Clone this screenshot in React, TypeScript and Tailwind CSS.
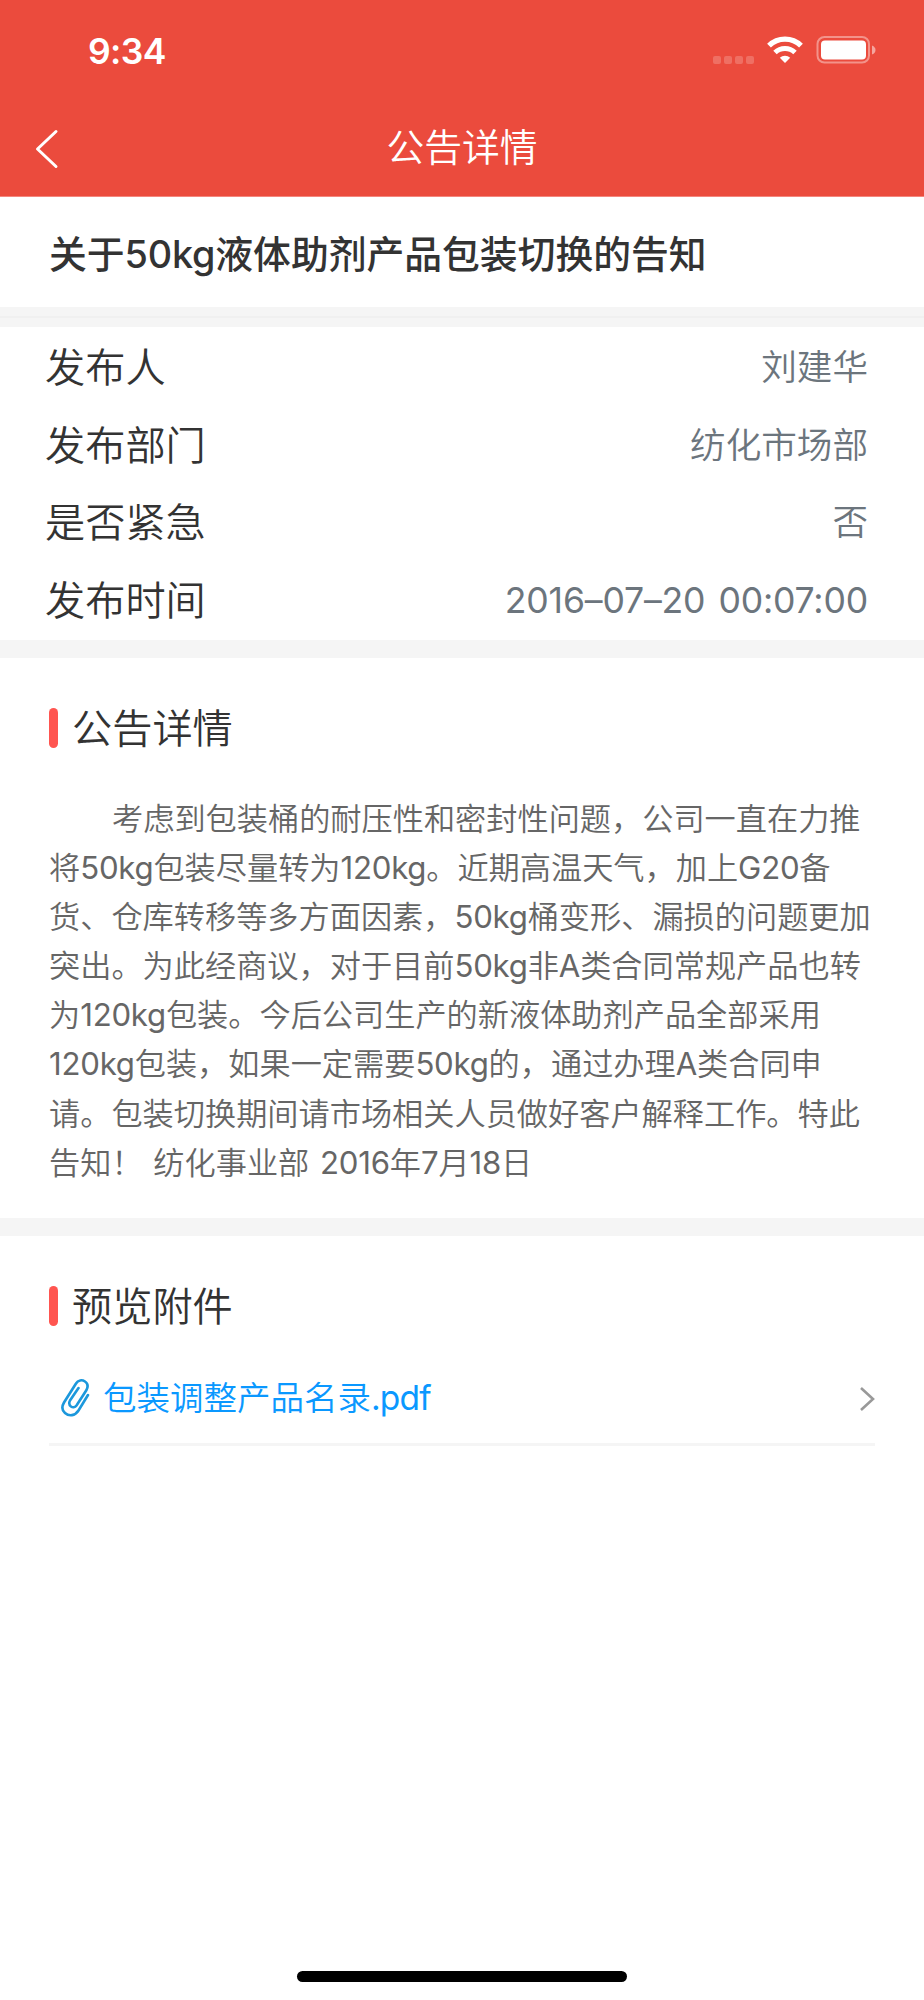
const info = [
  { label: "发布人", value: "刘建华" },
  { label: "发布部门", value: "纺化市场部" },
  { label: "是否紧急", value: "否" },
  { label: "发布时间", value: "2016–07–20 00:07:00" },
];

const lines = [
  "考虑到包装桶的耐压性和密封性问题，公司一直在力推",
  "将50kg包装尽量转为120kg。近期高温天气，加上G20备",
  "货、仓库转移等多方面因素，50kg桶变形、漏损的问题更加",
  "突出。为此经商议，对于目前50kg非A类合同常规产品也转",
  "为120kg包装。今后公司生产的新液体助剂产品全部采用",
  "120kg包装，如果一定需要50kg的，通过办理A类合同申",
  "请。包装切换期间请市场相关人员做好客户解释工作。特此",
  "告知！ 纺化事业部 2016年7月18日",
];

// style latin letters and digits on their own, leave the Chinese text alone
function Mixed({ text, latin }: { text: string; latin: string }) {
  return (
    <>
      {text.split(/([A-Za-z0-9.:–]+)/).map((part, i) =>
        i % 2 ? <span key={i} className={latin}>{part}</span> : part
      )}
    </>
  );
}

function StatusBar() {
  return (
    <div className="flex h-[100px] items-center pl-[88px] pr-[48px]">
      <span className="grow pt-[3px] text-[35.5px] font-semibold leading-[50px] tracking-[-0.6px]">9:34</span>
      <div className="flex items-center">
        <div className="mr-[13px] mt-[19px] flex gap-[3px]">
          <i className="size-2 rounded-[2px] bg-white/20" />
          <i className="size-2 rounded-[2px] bg-white/20" />
          <i className="size-2 rounded-[2px] bg-white/20" />
          <i className="size-2 rounded-[2px] bg-white/20" />
        </div>
        <svg width="36" height="28" viewBox="0 0 36 28" fill="none" stroke="#fff" className="mr-[13px]">
          <path d="M2 9.6 A23 23 0 0 1 34 9.6" strokeWidth="5.4" />
          <path d="M8 16.5 A14.5 14.5 0 0 1 28 16.5" strokeWidth="5" />
          <path d="M18 27 L12.8 21.8 A7.4 7.4 0 0 1 23.2 21.8 Z" fill="#fff" stroke="none" />
        </svg>
        <svg width="60" height="28" viewBox="0 0 60 28">
          <rect x="1.5" y="1" width="51.5" height="25.5" rx="7" fill="none" stroke="#fff" strokeOpacity=".4" strokeWidth="2" />
          <rect x="5" y="4.5" width="45" height="19" rx="4" fill="#fff" />
          <path d="M56 9.5 Q59.5 11 59.5 14 Q59.5 17 56 18.5 Z" fill="#fff" fillOpacity=".5" />
        </svg>
      </div>
    </div>
  );
}

function SectionTitle({ text }: { text: string }) {
  return (
    <div className="flex h-10 items-center">
      <i className="mr-[14px] h-10 w-[9px] rounded-full bg-[#ff5550]" />
      <h2 className="pt-[2px] text-[40.2px] font-[350] leading-10 text-[#333]">{text}</h2>
    </div>
  );
}

export default function App() {
  return (
    <div
      lang="zh-CN"
      className="flex h-[2000px] w-[924px] flex-col whitespace-nowrap bg-white font-['Inter','Noto_Sans_CJK_SC',sans-serif] font-[350] text-[#333]"
    >
      <header className="h-[197px] border-b border-[#f4867d] bg-[#eb4b3d] text-white">
        <StatusBar />
        <div className="grid h-24 grid-cols-[1fr_auto_1fr] items-center">
          <svg width="24" height="40" viewBox="0 0 24 40" className="ml-[35px] mt-[1px]" fill="none" stroke="#fff" strokeWidth="3" strokeLinecap="round" strokeLinejoin="round">
            <path d="M21 2.5 L2.5 20 L21 37.5" />
          </svg>
          <h1 className="pb-[3px] text-[37.8px] leading-[56px]">公告详情</h1>
        </div>
      </header>

      <div className="flex h-[110px] items-center pl-[49px] pt-[4px]">
        <p className="text-[37.8px] font-medium">
          <Mixed text="关于50kg液体助剂产品包装切换的告知" latin="tracking-[-0.2px]" />
        </p>
      </div>
      <div className="h-5 bg-[#f5f5f5] pt-[9px]">
        <div className="h-[2px] bg-[#f0f0f0]" />
      </div>

      <dl className="flex h-[313px] flex-col pt-[2px]">
        {info.map((row) => (
          <div key={row.label} className="flex h-[78.25px] items-center justify-between pl-[45px] pr-[56px]">
            <dt className="text-[40.2px] leading-[60px]">{row.label}</dt>
            <dd className="text-[35.6px] leading-[60px] text-[#6c757d] [word-spacing:3px]">
              <Mixed text={row.value} latin="font-normal tracking-[-0.17px]" />
            </dd>
          </div>
        ))}
      </dl>
      <div className="h-[18px] bg-[#f5f5f5]" />

      <section className="h-[560px] pl-[49px] pt-[50px]">
        <SectionTitle text="公告详情" />
        <div className="pt-[47px] text-[31.2px] leading-[49.1px] text-[#666] [word-spacing:2px]">
          {lines.map((line, i) => (
            <p key={i} className="first:pl-[63px]">
              <Mixed text={line} latin="font-normal tracking-[-0.25px]" />
            </p>
          ))}
        </div>
      </section>
      <div className="h-[18px] bg-[#f5f5f5]" />

      <section className="grow px-[49px] pt-[50px]">
        <SectionTitle text="预览附件" />
        <div className="mt-[26px] flex h-[94px] items-center border-b-[3px] border-[#f5f5f5] pl-[12px] pt-[2px]">
          <svg width="30" height="40" viewBox="0 0 30 40" className="-mt-[2px]" fill="none" stroke="#1c98dc" strokeWidth="2.6" strokeLinecap="round">
            <path d="M27 17 L17.5 32.5 C14 38 8 38.5 4 35 C0.5 32 1 28 3 24.5 L15 5.5 C17 2 21 1.5 24 3.5 C27 5.5 27 9 25.5 12 L15.5 27.5 C14 29.5 11.5 29.5 10 28.5 C8 27 8 24.5 9 22.5 L17.5 10" />
          </svg>
          <a className="ml-[12px] grow text-[33.5px] text-[#0a98ff]">
            <Mixed text="包装调整产品名录.pdf" latin="font-normal tracking-[-0.8px]" />
          </a>
          <svg width="15" height="24" viewBox="0 0 15 24" fill="none" stroke="#999" strokeWidth="2.6">
            <path d="M1 1 L13 12 L1 23" />
          </svg>
        </div>
      </section>

      <footer className="flex h-[29px] justify-center">
        <div className="h-[11px] w-[330px] rounded-full bg-black" />
      </footer>
    </div>
  );
}
